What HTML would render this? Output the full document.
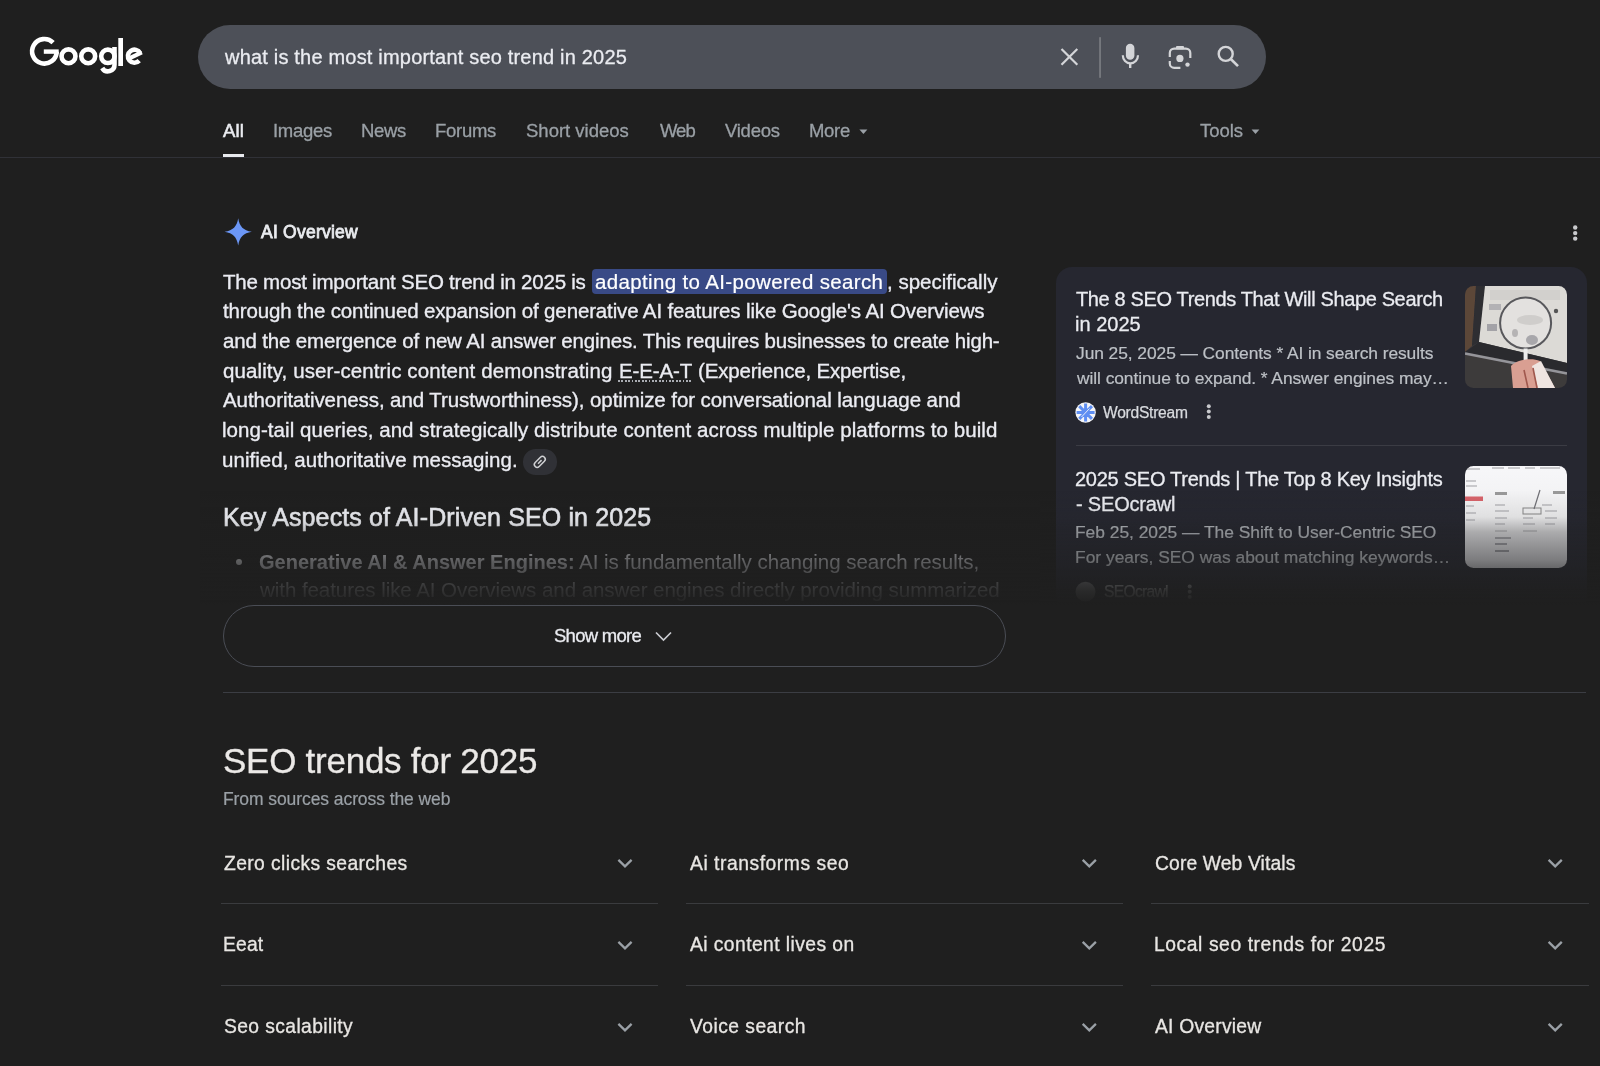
<!DOCTYPE html>
<html><head><meta charset="utf-8">
<style>
*{box-sizing:border-box;margin:0;padding:0}
html,body{width:1600px;height:1066px;overflow:hidden;background:#1f1f1f;font-family:"Liberation Sans",sans-serif;color:#e8eaed;position:relative}
.a{position:absolute}
.t{position:absolute;white-space:nowrap;will-change:transform}
svg{position:absolute;overflow:visible}
</style></head><body>
<svg class="a" style="left:0;top:0" width="160" height="90" viewBox="0 0 160 90">
<g fill="none" stroke="#fff" stroke-width="4.6">
<path d="M53.1,42.6 A12.3,12.3 0 1 0 56.7,51.6"/>
<circle cx="68.5" cy="56.3" r="6.95"/>
<circle cx="88.2" cy="56.3" r="6.95"/>
<circle cx="107.9" cy="56.3" r="6.7"/>
<path d="M114.5,47 V64.5 A6.6,6.6 0 0 1 102.2,68"/>
<path d="M140.2,53.2 A6.5,6.5 0 1 0 139.2,60.6"/>
</g>
<rect x="43.8" y="49.4" width="14.9" height="4.4" fill="#fff"/>
<rect x="118.3" y="38" width="4.7" height="28" fill="#fff"/>
<path d="M141.8,52.3 L128.2,58.8" stroke="#fff" stroke-width="4.2"/>
</svg>
<div class="a" style="left:198px;top:25px;width:1067.5px;height:64px;border-radius:32px;background:#4d5058"></div>
<div class="t " style="left:225.40px;top:47.17px;font-size:20px;line-height:20px;color:#ebecf2;letter-spacing:0.193px;-webkit-text-stroke:0.3px #e8eaed;">what is the most important seo trend in 2025</div>
<svg class="a" style="left:0;top:0" width="1300" height="90" viewBox="0 0 1300 90">
<g stroke="#d4d5d8" stroke-width="2.2" fill="none">
<path d="M1061.5,49 L1077.3,64.8 M1077.3,49 L1061.5,64.8"/>
<path d="M1122.8,55.2 A7.6,8.2 0 0 0 1138,55.2"/>
<path d="M1169.8,57 V53 A4.4,4.4 0 0 1 1174.2,48.6 H1185.9 A4.4,4.4 0 0 1 1190.3,53 V58"/>
<path d="M1169.8,61 V63.4 A4.4,4.4 0 0 0 1174.2,67.8 H1180.4"/>
<circle cx="1225.7" cy="53.9" r="7" stroke-width="2.4"/>
<path d="M1230.8,59 L1238,66.2" stroke-width="2.6"/>
</g>
<g fill="#d4d5d8">
<rect x="1125.9" y="43.8" width="8.5" height="16" rx="4.25"/>
<rect x="1129" y="63" width="2.4" height="5"/>
<rect x="1176" y="46" width="8" height="3.2" rx="1"/>
<circle cx="1179.9" cy="58.4" r="3.6"/>
<circle cx="1187.5" cy="64.6" r="2.2"/>
</g>
<rect x="1099.2" y="37.2" width="1.7" height="40.6" fill="#7b7d82"/>
</svg>
<div class="t " style="left:223.40px;top:122.14px;font-size:18.5px;line-height:18.5px;color:#ebecf2;letter-spacing:0.125px;-webkit-text-stroke:0.55px #e8eaed;">All</div>
<div class="t " style="left:273.00px;top:122.14px;font-size:18.5px;line-height:18.5px;color:#9aa0a6;letter-spacing:-0.283px;-webkit-text-stroke:0.3px currentColor;">Images</div>
<div class="t " style="left:361.20px;top:122.14px;font-size:18.5px;line-height:18.5px;color:#9aa0a6;letter-spacing:-0.303px;-webkit-text-stroke:0.3px currentColor;">News</div>
<div class="t " style="left:435.30px;top:122.14px;font-size:18.5px;line-height:18.5px;color:#9aa0a6;letter-spacing:-0.290px;-webkit-text-stroke:0.3px currentColor;">Forums</div>
<div class="t " style="left:526.40px;top:122.14px;font-size:18.5px;line-height:18.5px;color:#9aa0a6;letter-spacing:0.001px;-webkit-text-stroke:0.3px currentColor;">Short videos</div>
<div class="t " style="left:659.80px;top:122.14px;font-size:18.5px;line-height:18.5px;color:#9aa0a6;letter-spacing:-1.008px;-webkit-text-stroke:0.3px currentColor;">Web</div>
<div class="t " style="left:724.90px;top:122.14px;font-size:18.5px;line-height:18.5px;color:#9aa0a6;letter-spacing:-0.256px;-webkit-text-stroke:0.3px currentColor;">Videos</div>
<div class="t " style="left:809.40px;top:122.14px;font-size:18.5px;line-height:18.5px;color:#9aa0a6;letter-spacing:-0.320px;-webkit-text-stroke:0.3px currentColor;">More</div>
<div class="t " style="left:1200.00px;top:122.14px;font-size:18.5px;line-height:18.5px;color:#9aa0a6;letter-spacing:-0.034px;-webkit-text-stroke:0.3px currentColor;">Tools</div>
<svg class="a" style="left:0;top:0" width="1300" height="160" viewBox="0 0 1300 160"><g fill="#9aa0a6">
<path d="M859.4,129.4 H867.4 L863.4,133.9 Z"/><path d="M1251.6,129.4 H1259.4 L1255.5,133.9 Z"/></g></svg>
<div class="a" style="left:223px;top:153.5px;width:20.8px;height:4px;background:#e8eaed"></div>
<div class="a" style="left:0;top:157.3px;width:1600px;height:1.2px;background:#303137"></div>
<svg class="a" style="left:0;top:0" width="1600" height="260" viewBox="0 0 1600 260">
<path fill="#6c97f6" d="M238.2,218.2 C239.6,226.5 243.3,230.4 251.8,231.8 C243.3,233.2 239.6,237.1 238.2,245.4 C236.8,237.1 233.1,233.2 224.6,231.8 C233.1,230.4 236.8,226.5 238.2,218.2 Z"/>
<g fill="#c8c9cc"><circle cx="1575.2" cy="227.5" r="2.2"/><circle cx="1575.2" cy="233.1" r="2.2"/><circle cx="1575.2" cy="238.6" r="2.2"/></g>
</svg>
<div class="t " style="left:260.70px;top:223.79px;font-size:17.5px;line-height:17.5px;color:#ebecf2;letter-spacing:0.231px;-webkit-text-stroke:0.8px #e8eaed;">AI Overview</div>
<div class="a" style="left:592px;top:269px;width:295px;height:24.6px;border-radius:4px;background:#394a86"></div>
<div class="t " style="left:223.40px;top:271.75px;font-size:20.5px;line-height:20.5px;color:#ebecf2;letter-spacing:-0.226px;-webkit-text-stroke:0.35px #ebecf2;">The most important SEO trend in 2025 is</div>
<div class="t " style="left:595.00px;top:271.75px;font-size:20.5px;line-height:20.5px;color:#ffffff;letter-spacing:0.354px;-webkit-text-stroke:0.2px #fff;">adapting to AI-powered search</div>
<div class="t " style="left:886.50px;top:271.75px;font-size:20.5px;line-height:20.5px;color:#ebecf2;letter-spacing:-0.004px;-webkit-text-stroke:0.35px #ebecf2;">, specifically</div>
<div class="t " style="left:223.40px;top:301.43px;font-size:20.5px;line-height:20.5px;color:#ebecf2;letter-spacing:-0.139px;-webkit-text-stroke:0.35px #ebecf2;">through the continued expansion of generative AI features like Google's AI Overviews</div>
<div class="t " style="left:223.40px;top:331.11px;font-size:20.5px;line-height:20.5px;color:#ebecf2;letter-spacing:-0.166px;-webkit-text-stroke:0.35px #ebecf2;">and the emergence of new AI answer engines. This requires businesses to create high-</div>
<div class="t " style="left:223.40px;top:360.79px;font-size:20.5px;line-height:20.5px;color:#ebecf2;letter-spacing:0.111px;-webkit-text-stroke:0.35px #ebecf2;">quality, user-centric content demonstrating</div>
<div class="t " style="left:618.90px;top:360.79px;font-size:20.5px;line-height:20.5px;color:#ebecf2;letter-spacing:-0.133px;-webkit-text-stroke:0.35px #ebecf2;">E-E-A-T</div>
<div class="t " style="left:698.40px;top:360.79px;font-size:20.5px;line-height:20.5px;color:#ebecf2;letter-spacing:-0.174px;-webkit-text-stroke:0.35px #ebecf2;">(Experience, Expertise,</div>
<div class="a" style="left:618px;top:380.4px;width:74px;height:1.6px;background:repeating-linear-gradient(to right,#a9acb2 0,#a9acb2 1.7px,transparent 1.7px,transparent 3.4px)"></div>
<div class="t " style="left:223.40px;top:390.47px;font-size:20.5px;line-height:20.5px;color:#ebecf2;letter-spacing:-0.081px;-webkit-text-stroke:0.35px #ebecf2;">Authoritativeness, and Trustworthiness), optimize for conversational language and</div>
<div class="t " style="left:222.40px;top:420.15px;font-size:20.5px;line-height:20.5px;color:#ebecf2;letter-spacing:0.057px;-webkit-text-stroke:0.35px #ebecf2;">long-tail queries, and strategically distribute content across multiple platforms to build</div>
<div class="t " style="left:222.40px;top:449.83px;font-size:20.5px;line-height:20.5px;color:#ebecf2;letter-spacing:0.053px;-webkit-text-stroke:0.35px #ebecf2;">unified, authoritative messaging.</div>
<div class="a" style="left:522.7px;top:449.2px;width:34.2px;height:25.4px;border-radius:12.7px;background:#303136"></div>
<svg class="a" style="left:0;top:0" width="600" height="500" viewBox="0 0 600 500">
<g transform="rotate(-45 539.8 461.9)" fill="none" stroke="#d0d1d4" stroke-width="1.5">
<rect x="533.3" y="459.1" width="13" height="5.6" rx="2.8"/>
<path d="M537.3,461.9 H542.3"/>
</g></svg>
<div class="t " style="left:222.75px;top:505.09px;font-size:25px;line-height:25px;color:#ebecf2;letter-spacing:0.125px;-webkit-text-stroke:0.6px #e8eaed;">Key Aspects of AI-Driven SEO in 2025</div>
<div class="a" style="left:236px;top:558.8px;width:6px;height:6px;border-radius:3px;background:#e8eaed"></div>
<div class="t " style="left:258.50px;top:552.07px;font-size:20px;line-height:20px;color:#ebecf2;letter-spacing:0.013px;font-weight:700;">Generative AI &amp; Answer Engines:</div>
<div class="t " style="left:579.00px;top:551.65px;font-size:20.5px;line-height:20.5px;color:#ebecf2;letter-spacing:-0.019px;">AI is fundamentally changing search results,</div>
<div class="t " style="left:259.50px;top:580.45px;font-size:20.5px;line-height:20.5px;color:#ebecf2;letter-spacing:-0.054px;">with features like AI Overviews and answer engines directly providing summarized</div>
<div class="a" style="left:1056px;top:267px;width:530.5px;height:345px;border-radius:16px;background:#262730"></div>
<div class="t " style="left:1076.20px;top:289.27px;font-size:20px;line-height:20px;color:#ebecf2;letter-spacing:-0.361px;-webkit-text-stroke:0.3px #e8eaed;">The 8 SEO Trends That Will Shape Search</div>
<div class="t " style="left:1075.20px;top:314.27px;font-size:20px;line-height:20px;color:#ebecf2;letter-spacing:0.018px;-webkit-text-stroke:0.3px #e8eaed;">in 2025</div>
<div class="t " style="left:1076.25px;top:344.52px;font-size:17.4px;line-height:17.4px;color:#bdc1c6;letter-spacing:-0.069px;-webkit-text-stroke:0.2px #bdc1c6;">Jun 25, 2025 — Contents * AI in search results</div>
<div class="t " style="left:1077.25px;top:369.52px;font-size:17.4px;line-height:17.4px;color:#bdc1c6;letter-spacing:-0.070px;-webkit-text-stroke:0.2px #bdc1c6;">will continue to expand. * Answer engines may…</div>
<div class="t " style="left:1103.00px;top:405.39px;font-size:15.6px;line-height:15.6px;color:#d8dade;letter-spacing:-0.261px;-webkit-text-stroke:0.25px #d8dade;">WordStream</div>
<div class="a" style="left:1076px;top:445px;width:491px;height:1px;background:#3b3c44"></div>
<div class="t " style="left:1075.00px;top:468.57px;font-size:20px;line-height:20px;color:#ebecf2;letter-spacing:-0.264px;-webkit-text-stroke:0.3px #e8eaed;">2025 SEO Trends | The Top 8 Key Insights</div>
<div class="t " style="left:1076.00px;top:494.07px;font-size:20px;line-height:20px;color:#ebecf2;letter-spacing:-0.187px;-webkit-text-stroke:0.3px #e8eaed;">- SEOcrawl</div>
<div class="t " style="left:1075.25px;top:524.17px;font-size:17.4px;line-height:17.4px;color:#bdc1c6;letter-spacing:-0.018px;-webkit-text-stroke:0.2px #bdc1c6;">Feb 25, 2025 — The Shift to User-Centric SEO</div>
<div class="t " style="left:1075.25px;top:548.77px;font-size:17.4px;line-height:17.4px;color:#bdc1c6;letter-spacing:0.003px;-webkit-text-stroke:0.2px #bdc1c6;">For years, SEO was about matching keywords…</div>
<div class="t " style="left:1103.50px;top:583.99px;font-size:15.6px;line-height:15.6px;color:#d8dade;letter-spacing:-0.679px;-webkit-text-stroke:0.25px #d8dade;">SEOcrawl</div>
<svg class="a" style="left:0;top:0" width="1600" height="620" viewBox="0 0 1600 620">
<defs>
<filter id="bl" x="-5%" y="-5%" width="110%" height="110%"><feGaussianBlur stdDeviation="0.6"/></filter>
<clipPath id="th1"><rect x="1465" y="286" width="102" height="102" rx="8.5"/></clipPath>
<clipPath id="th2"><rect x="1465" y="466" width="102" height="102" rx="8.5"/></clipPath>
<linearGradient id="g2" x1="0" y1="0" x2="0" y2="1"><stop offset="0" stop-color="#f7f7f9"/><stop offset="0.5" stop-color="#f0f0f1"/><stop offset="1" stop-color="#d6d6db"/></linearGradient>
</defs>
<g clip-path="url(#th1)"><g filter="url(#bl)">
<rect x="1465" y="286" width="102" height="102" fill="#3b3a3d"/>
<path d="M1465,286 H1476 L1472,346 L1465,352 Z" fill="#5c4639"/>
<path d="M1476,286 H1485 L1479,342 L1472,346 Z" fill="#2d2d31"/>
<path d="M1485,286 H1567 V363 L1479,342 Z" fill="#dcdad6"/>
<path d="M1490,290 H1560 V300 H1490 Z" fill="#d2d0cd"/>
<path d="M1465,352 L1479,342 L1567,363 V372 Z" fill="#2b2b2f"/>
<path d="M1465,354 L1567,374 V388 H1465 Z" fill="#3e3a3b"/>
<path d="M1465,353.5 L1567,373.5" stroke="#95959a" stroke-width="2.6"/>
<circle cx="1525.6" cy="323" r="25.5" fill="#e3e1df" stroke="#58585c" stroke-width="2"/>
<ellipse cx="1530" cy="320" rx="13" ry="5" fill="#cfcdcb"/>
<ellipse cx="1532" cy="340" rx="6" ry="5" fill="#a8a7ab"/>
<ellipse cx="1515" cy="333" rx="3" ry="4" fill="#b5b3b4"/>
<rect x="1489" y="304" width="12" height="6" fill="#b3b2b5"/>
<rect x="1487" y="324" width="10" height="7" fill="#a3a2a7"/>
<circle cx="1556" cy="311" r="2.2" fill="#555"/>
<rect x="1523.6" y="348.5" width="4" height="13" fill="#ececec"/>
<path d="M1511,366 C1516,360 1531,357 1540,361 L1555,388 H1513 Z" fill="#d99f92"/>
<path d="M1532,366 L1541,361 L1555,388 H1538 Z" fill="#efe5e1"/>
<path d="M1524,370 L1528,388 M1533,368 L1537,388" stroke="#a0584e" stroke-width="1.6"/></g>
</g>
<g clip-path="url(#th2)"><g filter="url(#bl)">
<rect x="1465" y="466" width="102" height="102" fill="url(#g2)"/>
<rect x="1465" y="496.5" width="18" height="4.5" fill="#d7636a"/>
<g fill="#c9c9cc">
<rect x="1466" y="468" width="14" height="2"/><rect x="1492" y="467" width="12" height="2"/><rect x="1508" y="467" width="12" height="2"/><rect x="1525" y="467" width="10" height="2"/><rect x="1540" y="467" width="20" height="2"/>
<rect x="1466" y="480" width="10" height="2"/><rect x="1466" y="485" width="11" height="2"/>
<rect x="1495" y="492" width="12" height="3" fill="#999"/><rect x="1553" y="491" width="12" height="3" fill="#999"/>
<rect x="1495" y="504" width="10" height="2"/><rect x="1542" y="504" width="10" height="2"/>
<rect x="1495" y="510" width="14" height="2"/><rect x="1523" y="508" width="18" height="6" fill="none" stroke="#888" stroke-width="1"/><rect x="1545" y="510" width="12" height="2"/>
<rect x="1495" y="517" width="12" height="2"/><rect x="1523" y="517" width="10" height="2"/><rect x="1545" y="517" width="12" height="2"/>
<rect x="1495" y="523" width="10" height="2"/><rect x="1523" y="523" width="12" height="2"/><rect x="1545" y="523" width="10" height="2"/>
<rect x="1495" y="530" width="12" height="2"/><rect x="1523" y="530" width="14" height="2"/>
<rect x="1495" y="537" width="16" height="2" fill="#a9a9ae"/><rect x="1495" y="543" width="12" height="2" fill="#a0a0a6"/><rect x="1495" y="550" width="14" height="2" fill="#98989e"/>
<rect x="1466" y="505" width="8" height="2"/><rect x="1466" y="512" width="10" height="2"/><rect x="1466" y="519" width="9" height="2"/>
</g>
<path d="M1534,509 L1540,490" stroke="#6f6f75" stroke-width="1.2"/></g>
</g>
<circle cx="1085.6" cy="412.5" r="10.2" fill="#f4f5f8"/>
<path d="M1088.80,412.50 L1094.60,412.50 M1087.86,414.76 L1091.96,418.86 M1085.60,415.70 L1085.60,421.50 M1083.34,414.76 L1079.24,418.86 M1082.40,412.50 L1076.60,412.50 M1083.34,410.24 L1079.24,406.14 M1085.60,409.30 L1085.60,403.50 M1087.86,410.24 L1091.96,406.14" stroke="#5e8ef2" stroke-width="3"/>
<circle cx="1085.6" cy="412.5" r="4.2" fill="#5e8ef2"/>
<path d="M1081.5,417 L1089.5,408.5" stroke="#f4f5f8" stroke-width="0.9"/>
<g fill="#c8c9cc"><circle cx="1208.8" cy="406.3" r="2"/><circle cx="1208.8" cy="411.6" r="2"/><circle cx="1208.8" cy="416.9" r="2"/></g>
<circle cx="1085.5" cy="591.8" r="10" fill="#8a8b90"/>
<g fill="#c8c9cc"><circle cx="1189.7" cy="586.5" r="2"/><circle cx="1189.7" cy="591.8" r="2"/><circle cx="1189.7" cy="597.1" r="2"/></g>
</svg>
<div class="a" style="left:1040px;top:490px;width:560px;height:125px;background:linear-gradient(to bottom, rgba(31,31,31,0) 0px, rgba(31,31,31,0.08) 27px, rgba(31,31,31,0.3) 42px, rgba(31,31,31,0.36) 50px, rgba(31,31,31,0.5) 70px, rgba(31,31,31,0.9) 101px, rgba(31,31,31,1) 115px)"></div>
<div class="a" style="left:200px;top:490px;width:840px;height:125px;background:linear-gradient(to bottom, rgba(31,31,31,0) 0px, rgba(31,31,31,0.06) 30px, rgba(31,31,31,0.3) 46px, rgba(31,31,31,0.7) 72px, rgba(31,31,31,0.9) 100px, rgba(31,31,31,1) 115px)"></div>
<div class="a" style="left:223px;top:605px;width:783px;height:62px;border:1.2px solid #4a4d55;border-radius:31px;background:#1f1f1f"></div>
<div class="t " style="left:553.60px;top:626.54px;font-size:18.5px;line-height:18.5px;color:#ebecf2;letter-spacing:-0.735px;-webkit-text-stroke:0.3px #e8eaed;">Show more</div>
<svg class="a" style="left:0;top:0" width="1000" height="700" viewBox="0 0 1000 700"><path d="M656,632.5 L663.5,640 L671,632.5" fill="none" stroke="#c9cbd0" stroke-width="1.7"/></svg>
<div class="a" style="left:223px;top:691.5px;width:1363px;height:1.5px;background:#3b3d43"></div>
<div class="t " style="left:223.00px;top:743.37px;font-size:35px;line-height:35px;color:#ebe9e7;letter-spacing:-0.256px;-webkit-text-stroke:0.3px #ebe9e7;">SEO trends for 2025</div>
<div class="t " style="left:223.00px;top:790.69px;font-size:17.5px;line-height:17.5px;color:#9aa0a6;letter-spacing:-0.079px;-webkit-text-stroke:0.2px #9aa0a6;">From sources across the web</div>
<div class="t " style="left:224.40px;top:853.86px;font-size:19.3px;line-height:19.3px;color:#e8e6e3;letter-spacing:0.396px;-webkit-text-stroke:0.3px #e8e6e3;">Zero clicks searches</div>
<div class="t " style="left:689.60px;top:853.86px;font-size:19.3px;line-height:19.3px;color:#e8e6e3;letter-spacing:0.538px;-webkit-text-stroke:0.3px #e8e6e3;">Ai transforms seo</div>
<div class="t " style="left:1154.70px;top:853.86px;font-size:19.3px;line-height:19.3px;color:#e8e6e3;letter-spacing:0.124px;-webkit-text-stroke:0.3px #e8e6e3;">Core Web Vitals</div>
<div class="t " style="left:223.40px;top:935.46px;font-size:19.3px;line-height:19.3px;color:#e8e6e3;letter-spacing:0.164px;-webkit-text-stroke:0.3px #e8e6e3;">Eeat</div>
<div class="t " style="left:689.60px;top:935.46px;font-size:19.3px;line-height:19.3px;color:#e8e6e3;letter-spacing:0.425px;-webkit-text-stroke:0.3px #e8e6e3;">Ai content lives on</div>
<div class="t " style="left:1153.70px;top:935.46px;font-size:19.3px;line-height:19.3px;color:#e8e6e3;letter-spacing:0.576px;-webkit-text-stroke:0.3px #e8e6e3;">Local seo trends for 2025</div>
<div class="t " style="left:224.40px;top:1017.46px;font-size:19.3px;line-height:19.3px;color:#e8e6e3;letter-spacing:0.392px;-webkit-text-stroke:0.3px #e8e6e3;">Seo scalability</div>
<div class="t " style="left:689.60px;top:1017.46px;font-size:19.3px;line-height:19.3px;color:#e8e6e3;letter-spacing:0.466px;-webkit-text-stroke:0.3px #e8e6e3;">Voice search</div>
<div class="t " style="left:1154.70px;top:1017.46px;font-size:19.3px;line-height:19.3px;color:#e8e6e3;letter-spacing:0.230px;-webkit-text-stroke:0.3px #e8e6e3;">AI Overview</div>
<svg class="a" style="left:0;top:0" width="1600" height="1066" viewBox="0 0 1600 1066"><path d="M618.4,859.9000000000001 L625,866.3000000000001 L631.6,859.9000000000001 M1082.7,859.9000000000001 L1089.3,866.3000000000001 L1095.8999999999999,859.9000000000001 M1548.6000000000001,859.9000000000001 L1555.2,866.3000000000001 L1561.8,859.9000000000001 M618.4,941.9000000000001 L625,948.3000000000001 L631.6,941.9000000000001 M1082.7,941.9000000000001 L1089.3,948.3000000000001 L1095.8999999999999,941.9000000000001 M1548.6000000000001,941.9000000000001 L1555.2,948.3000000000001 L1561.8,941.9000000000001 M618.4,1023.9000000000001 L625,1030.3 L631.6,1023.9000000000001 M1082.7,1023.9000000000001 L1089.3,1030.3 L1095.8999999999999,1023.9000000000001 M1548.6000000000001,1023.9000000000001 L1555.2,1030.3 L1561.8,1023.9000000000001" fill="none" stroke="#9aa0a6" stroke-width="2.3"/></svg>
<div class="a" style="left:220.6px;top:902.5px;width:437.69999999999993px;height:1.5px;background:#3a3b3e"></div>
<div class="a" style="left:685.8px;top:902.5px;width:437.70000000000005px;height:1.5px;background:#3a3b3e"></div>
<div class="a" style="left:1151px;top:902.5px;width:438px;height:1.5px;background:#3a3b3e"></div>
<div class="a" style="left:220.6px;top:984.5px;width:437.69999999999993px;height:1.5px;background:#3a3b3e"></div>
<div class="a" style="left:685.8px;top:984.5px;width:437.70000000000005px;height:1.5px;background:#3a3b3e"></div>
<div class="a" style="left:1151px;top:984.5px;width:438px;height:1.5px;background:#3a3b3e"></div>
</body></html>
